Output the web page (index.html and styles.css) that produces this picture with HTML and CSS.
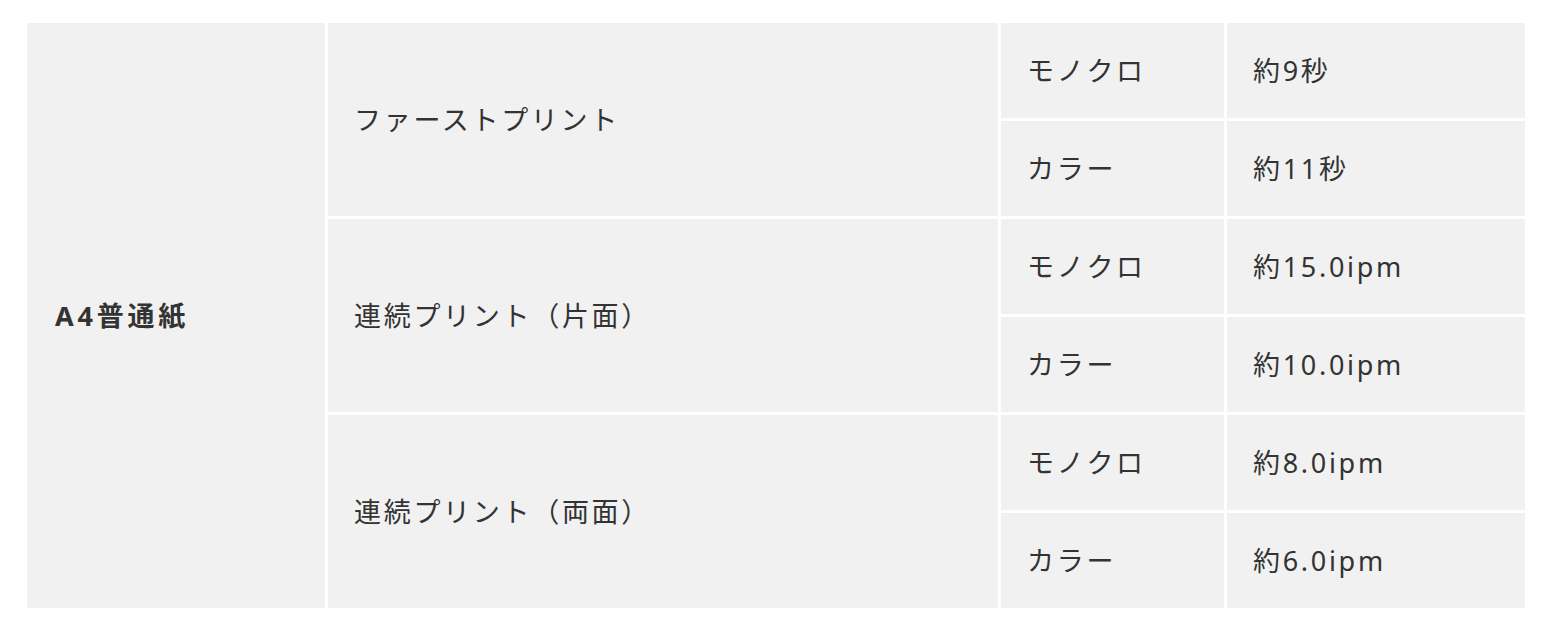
FILE: index.html
```html
<!DOCTYPE html>
<html lang="ja">
<head>
<meta charset="utf-8">
<title>印刷速度</title>
<link rel="stylesheet" href="styles.css">
</head>
<body>
<div class="spec">
  <div class="cell head" style="grid-row: 1 / span 6">A4普通紙</div>
  <div class="cell" style="grid-row: 1 / span 2">ファーストプリント</div>
  <div class="cell">モノクロ</div>
  <div class="cell">約9秒</div>
  <div class="cell">カラー</div>
  <div class="cell">約11秒</div>
  <div class="cell" style="grid-row: 3 / span 2">連続プリント（片面）</div>
  <div class="cell">モノクロ</div>
  <div class="cell">約15.0ipm</div>
  <div class="cell">カラー</div>
  <div class="cell">約10.0ipm</div>
  <div class="cell" style="grid-row: 5 / span 2">連続プリント（両面）</div>
  <div class="cell">モノクロ</div>
  <div class="cell">約8.0ipm</div>
  <div class="cell">カラー</div>
  <div class="cell">約6.0ipm</div>
</div>
</body>
</html>
```

FILE: styles.css
```css
html, body {
  margin: 0;
  padding: 0;
  background: #ffffff;
}
body {
  padding: 23px 0 0 27px;
  font-family: "Noto Sans", "Noto Sans CJK JP", sans-serif;
  color: #333333;
}
.spec {
  display: grid;
  grid-template-columns: 298px 670px 223px 298px;
  grid-auto-rows: 95px;
  gap: 3px;
  width: 1498px;
}
.cell {
  background: #f1f1f1;
  display: flex;
  align-items: center;
  padding: 0 0 3px 26px;
  font-size: 27px;
  letter-spacing: 0.1em;
  white-space: nowrap;
}
.head {
  font-weight: 700;
  padding-left: 28px;
  letter-spacing: 0.14em;
}
```
